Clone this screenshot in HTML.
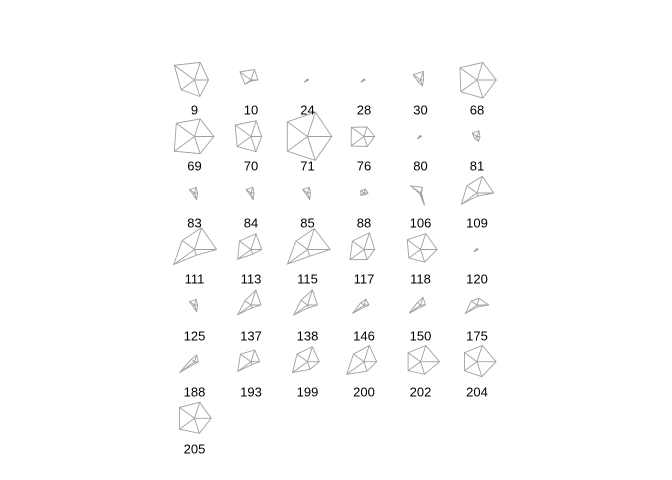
<!DOCTYPE html>
<html><head><meta charset="utf-8"><style>
html,body{margin:0;padding:0;background:#fff;}
svg{display:block;}
text{font-family:"Liberation Sans",Arial,sans-serif;font-size:13px;fill:#000;}
</style></head><body>
<svg id="s" width="672" height="480" xmlns="http://www.w3.org/2000/svg">
<g id="g" stroke="#a0a0a0" stroke-width="0.9" fill="none"></g>
<g id="t" text-anchor="middle"></g>
</svg>
<script>
var cols=[194.5,251,307.5,364,420.5,477];
var rowsC=[80,136.5,193,249.5,305,361.7,418.3];
var rowsL=[110,166,223,279,336,392,449];
var d=[
["9",14,18.5,25,16.6,17.4],["10",7,11,13.7,7.4,1],["24",1,1,1,4,0.5],["28",1,1,1,4,0.5],["30",3,9,9,3,6],["68",19.3,18.4,21,20,19],
["69",19.3,18.5,22.5,25,18],["70",10.7,16.5,19.5,17,16],["71",24.3,25.6,25,25,25],["76",10.7,10,15.6,16,10.5],["80",1,1,1,4,0.5],["81",3,6,6,3,5],
["83",3,6,6,2,7],["84",3,6,6,2,7],["85",3,6,6,2,7],["88",4,4,4,4,2],["106",1,6,12,1,13],["109",16.7,17.5,12.5,19.3,3],
["111",22,22.8,15.3,25.6,6],["113",10.7,16.5,14.4,16.5,5],["115",22.7,22,14.4,24.7,7],["117",10.7,17.5,14.4,17.3,10.5],["118",16.7,16.8,16.5,14.4,13.3],["120",1,1,1,4,0.5],
["125",3,6,6,2,7],["137",10,15.8,7.4,16.5,3],["138",10,16,8,17,3],["146",5,6,4,14.4,2],["150",5,8,4,14,2],["175",11.7,7,7,14.4,2],
["188",4,7,4,18.5,2],["193",8.7,12.3,13,16.5,3],["199",11.7,15.8,13,18.5,8],["200",12.7,17,13,21.4,10],["202",19,17,15.3,15.3,13.3],["204",19,17,15.5,15.5,15.8],
["205",16.7,16.8,18.5,18.5,15.8]];
var g=document.getElementById('g'),t=document.getElementById('t'),ns="http://www.w3.org/2000/svg";
d.forEach(function(s,i){
 var r=Math.floor(i/6),c=i%6,cx=cols[c],cy=rowsC[r];
 var pts=[],rays="";
 for(var k=0;k<5;k++){var a=k*72*Math.PI/180,R=s[k+1];
  var x=cx+R*Math.cos(a),y=cy-R*Math.sin(a);pts.push(x.toFixed(1)+","+y.toFixed(1));
  rays+="M"+cx+","+cy+"L"+x.toFixed(1)+","+y.toFixed(1);}
 var p=document.createElementNS(ns,"polygon");p.setAttribute("points",pts.join(" "));g.appendChild(p);
 var pa=document.createElementNS(ns,"path");pa.setAttribute("d",rays);g.appendChild(pa);
 var tx=document.createElementNS(ns,"text");tx.setAttribute("x",cx);tx.setAttribute("y",rowsL[r]+4.7);tx.textContent=s[0];t.appendChild(tx);
});
</script>
</body></html>
